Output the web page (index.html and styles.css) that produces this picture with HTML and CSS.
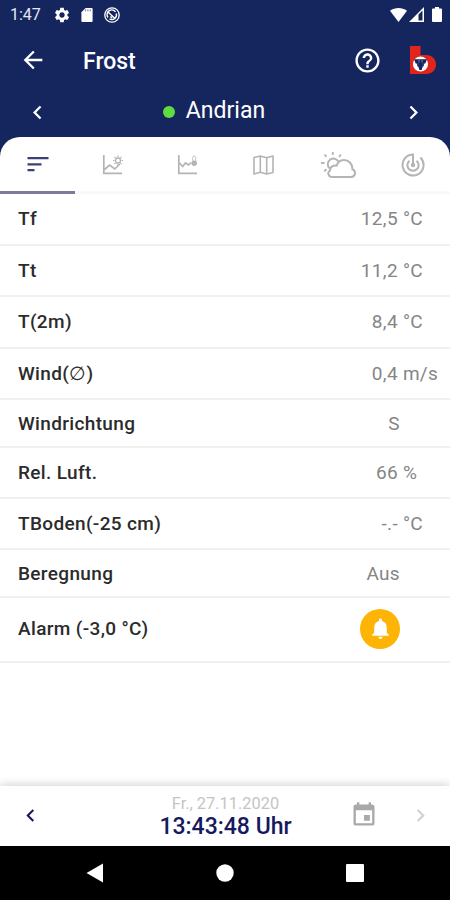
FILE: index.html
```html
<!DOCTYPE html>
<html lang="de">
<head>
<meta charset="UTF-8">
<meta name="viewport" content="width=device-width, initial-scale=1.0">
<title>Frost</title>
<link rel="stylesheet" href="styles.css">
</head>
<body>
<div class="app">
  <header class="header">
    <div class="status-bar">
      <span class="time">1:47</span>
      <svg class="gear" width="18" height="18" viewBox="0 0 24 24"><path d="M19.14 12.94c.04-.3.06-.61.06-.94 0-.32-.02-.64-.07-.94l2.03-1.58c.18-.14.23-.41.12-.61l-1.92-3.32c-.12-.22-.37-.29-.59-.22l-2.39.96c-.5-.38-1.03-.7-1.62-.94l-.36-2.54c-.04-.24-.24-.41-.48-.41h-3.84c-.24 0-.43.17-.47.41l-.36 2.54c-.59.24-1.13.57-1.62.94l-2.39-.96c-.22-.08-.47 0-.59.22L2.74 8.87c-.12.21-.08.47.12.61l2.03 1.58c-.05.3-.09.63-.09.94s.02.64.07.94l-2.03 1.58c-.18.14-.23.41-.12.61l1.92 3.32c.12.22.37.29.59.22l2.39-.96c.5.38 1.03.7 1.62.94l.36 2.54c.05.24.24.41.48.41h3.84c.24 0 .44-.17.47-.41l.36-2.54c.59-.24 1.13-.56 1.62-.94l2.39.96c.22.08.47 0 .59-.22l1.92-3.32c.12-.22.07-.47-.12-.61l-2.01-1.58zM12 15.6c-1.98 0-3.6-1.62-3.6-3.6s1.62-3.6 3.6-3.6 3.6 1.62 3.6 3.6-1.62 3.6-3.6 3.6z"/></svg>
      <svg class="sd" width="12" height="14" viewBox="0 0 12 15"><path d="M4.500 0H11a1 1 0 0 1 1 1v13a1 1 0 0 1-1 1H1a1 1 0 0 1-1-1V4.500z"/><path class="sd-pins" d="M4.500 1.500v2M7 1.500v2M9.500 1.500v2"/></svg>
      <svg class="cast line" width="16" height="16" viewBox="0 0 16 16"><circle cx="8" cy="8" r="7.200" stroke-width="1.300"/><path d="M4 10.500a4.700 4.700 0 0 1 7.500-5.700M12.300 6.500a4.700 4.700 0 0 1-6.800 5.400M4 5l7.500 7M6.500 9.500l1.500 1.500" stroke-width="1.400"/></svg>
      <span class="system">
        <svg width="17" height="14" viewBox="0 0 17 14"><path d="M0 2.800C5-.9 12-.9 17 2.800L8.500 14z"/></svg>
        <svg width="15" height="15" viewBox="0 0 15 15"><path fill-rule="evenodd" d="M15 0v15H0zM13.500 3.500L9.500 7.500v6h4z"/></svg>
        <svg class="battery" width="10" height="15" viewBox="0 0 10 15"><path d="M3 0h4v1.500h2a1 1 0 0 1 1 1V14a1 1 0 0 1-1 1H1a1 1 0 0 1-1-1V2.500a1 1 0 0 1 1-1h2z"/></svg>
      </span>
    </div>
    <div class="title-bar">
      <svg width="28" height="28" viewBox="0 0 24 24"><path d="M20 11H7.830l5.590-5.590L12 4l-8 8 8 8 1.410-1.410L7.830 13H20v-2z"/></svg>
      <h1>Frost</h1>
      <svg class="help" width="29" height="29" viewBox="0 0 24 24"><path d="M11 18h2v-2h-2v2zm1-16C6.480 2 2 6.480 2 12s4.480 10 10 10 10-4.480 10-10S17.520 2 12 2zm0 18c-4.410 0-8-3.590-8-8s3.590-8 8-8 8 3.590 8 8-3.590 8-8 8zm0-14c-2.210 0-4 1.790-4 4h2c0-1.100.9-2 2-2s2 .9 2 2c0 2-3 1.750-3 5h2c0-2.250 3-2.500 3-5 0-2.210-1.790-4-4-4z"/></svg>
      <svg class="logo" width="27" height="28" viewBox="0 0 27 28">
        <path class="logo-b" d="M0 0h10.500v9H16c6 0 10 4 10 9.500S22 28 16 28H0z"/>
        <circle class="logo-disc" cx="10.500" cy="18" r="7.600"/>
        <path class="logo-grape" d="M4 13.300h13l-1.700 4.200h-1l-.8 3h-.8l-1 3.500H9.300l-1-3.500h-.8l-.8-3h-1z"/>
        <path class="logo-gaps" d="M9 14v2.500M12 14v2.500M7.500 18h1M12.500 18h1"/>
      </svg>
    </div>
    <div class="station-bar">
      <svg width="27" height="27" viewBox="0 0 24 24"><path d="M15.410 7.410L14 6l-6 6 6 6 1.410-1.410L10.830 12z"/></svg>
      <div class="station"><span class="dot"></span>Andrian</div>
      <svg width="27" height="27" viewBox="0 0 24 24"><path d="M10 6L8.590 7.410 13.170 12l-4.580 4.590L10 18l6-6z"/></svg>
    </div>
  </header>

  <main class="content">
    <nav class="tabs">
      <div class="tab active">
        <svg class="sort" width="22" height="16" viewBox="0 0 22 16"><path d="M.5 1h21v2.200H.5zM.5 7.200h14v2.200H.5zM.5 13h7v2.200h-7z"/></svg>
      </div>
      <div class="tab">
        <svg class="line" width="22" height="20" viewBox="0 0 22 20"><path d="M1.800 0v18.300H20M2.500 14.500l5-4.500 5.300 4 5-5"/><circle cx="16" cy="5.500" r="2.500" stroke-width="1.300"/><path d="M16 .5v1.500M16 9v1.500M11 5.500h1.500M19.500 5.500H21M12.500 2l1 1M18.500 8l1 1M19.500 2l-1 1M13.500 8l-1 1" stroke-width="1.200"/></svg>
      </div>
      <div class="tab">
        <svg class="line" width="22" height="20" viewBox="0 0 22 20"><path d="M1.800 0v18.300H20M2.500 8l3.200 3.500L8.500 8l3 2 2.500-2.500"/><path d="M15.700 6.500V2.500a1.500 1.500 0 0 1 3 0v4" stroke-width=".8"/><circle class="bulb" cx="17.200" cy="8.300" r="2.700"/></svg>
      </div>
      <div class="tab">
        <svg class="line" width="21" height="20" viewBox="0 0 21 20"><path d="M1 2.500L7.300 1l6.400 1.800L20 1v16.500L13.700 19l-6.400-1.800L1 19zM7.300 1v16.200M13.700 2.800V19" stroke-width="1.600" stroke-linejoin="round"/></svg>
      </div>
      <div class="tab">
        <svg class="line weather" width="35" height="27" viewBox="0 0 35 27"><path d="M11 25h19a4 4 0 0 0 1.500-7.700C31.500 11.500 27.500 8 23 8c-3.700 0-6.300 2.300-7.300 5.500C11.500 12.800 9 15.500 9 18.500c-3.200 2-1.500 6.500 2 6.500z" stroke-width="2"/><path d="M8.500 16.200A5.600 5.600 0 1 1 17.300 9.500" stroke-width="2"/><path d="M11.800 0v3M3.500 2.500l2 2.300M20 2.500l-2 2.300M0 11h3.500M3.200 19.200l2.300-2" stroke-width="1.800"/></svg>
      </div>
      <div class="tab">
        <svg class="line radar" width="24" height="24" viewBox="0 0 24 24"><path d="M12 12V1.500a10.500 10.500 0 1 0 7.400 3M8.500 7.800a5.600 5.600 0 1 0 7 0" stroke-width="2"/><circle class="bulb" cx="12" cy="12" r="2.200"/></svg>
      </div>
    </nav>

    <div class="rows">
      <div class="row"><span>Tf</span><span class="num">12,5</span><span class="unit">°C</span></div>
      <div class="row"><span>Tt</span><span class="num">11,2</span><span class="unit">°C</span></div>
      <div class="row"><span>T(2m)</span><span class="num">8,4</span><span class="unit">°C</span></div>
      <div class="row"><span>Wind(<span class="avg">∅</span>)</span><span class="num">0,4</span><span class="unit">m/s</span></div>
      <div class="row"><span>Windrichtung</span><span class="num">S</span></div>
      <div class="row"><span>Rel. Luft.</span><span class="num">66</span><span class="unit">%</span></div>
      <div class="row"><span>TBoden(-25 cm)</span><span class="num">-.-</span><span class="unit">°C</span></div>
      <div class="row"><span>Beregnung</span><span class="num">Aus</span></div>
      <div class="row alarm">
        <span>Alarm (-3,0 °C)</span>
        <span class="bell"><svg width="25" height="25" viewBox="0 0 24 24"><path d="M12 22c1.100 0 2-.9 2-2h-4c0 1.100.89 2 2 2zm6-6v-5c0-3.070-1.640-5.640-4.500-6.320V4c0-.83-.67-1.500-1.500-1.500s-1.500.67-1.500 1.500v.68C7.630 5.360 6 7.920 6 11v5l-2 2v1h16v-1l-2-2z"/></svg></span>
      </div>
    </div>
  </main>

  <footer class="date-bar">
    <svg class="prev" width="25" height="25" viewBox="0 0 24 24"><path d="M15.410 7.410L14 6l-6 6 6 6 1.410-1.410L10.830 12z"/></svg>
    <div class="date">
      <div class="day">Fr., 27.11.2020</div>
      <div class="clock">13:43:48 Uhr</div>
    </div>
    <svg class="calendar" width="28" height="28" viewBox="0 0 24 24"><path d="M17 12h-5v5h5v-5zM16 1v2H8V1H6v2H5c-1.110 0-1.990.9-1.990 2L3 19c0 1.100.89 2 2 2h14c1.100 0 2-.9 2-2V5c0-1.100-.9-2-2-2h-1V1h-2zm3 18H5V8h14v11z"/></svg>
    <svg class="next" width="25" height="25" viewBox="0 0 24 24"><path d="M10 6L8.590 7.410 13.170 12l-4.580 4.590L10 18l6-6z"/></svg>
  </footer>

  <div class="nav-bar">
    <svg width="18" height="20" viewBox="0 0 18 20"><path d="M17 .5v19L.5 10z"/></svg>
    <svg width="18" height="18" viewBox="0 0 18 18"><circle cx="9" cy="9" r="8.700"/></svg>
    <svg width="18" height="18" viewBox="0 0 18 18"><rect width="18" height="18" rx="1"/></svg>
  </div>
</div>
</body>
</html>
```
FILE: styles.css
```css
* {
  box-sizing: border-box;
}

body {
  margin: 0;
  font-family: Roboto, "Noto Sans", sans-serif;
  background: #fff;
}

svg {
  display: block;
  flex: none;
  fill: currentColor;
}

.line {
  fill: none;
  stroke: currentColor;
  stroke-width: 1.7;
}

.bulb {
  fill: currentColor;
  stroke: none;
}

.app {
  height: 900px;
  display: flex;
  flex-direction: column;
  background: #15265f;
  overflow: hidden;
}

.header {
  height: 137px;
  color: #fff;
}

.status-bar {
  display: flex;
  align-items: center;
  height: 29px;
  padding: 0 8px 0 10px;
}

.time {
  width: 43px;
  font-size: 16px;
  color: #e4e7f0;
}

.sd {
  margin-left: 10px;
}

.sd-pins {
  stroke: #15265f;
  stroke-width: 0.7;
}

.cast {
  margin-left: 11px;
}

.system {
  display: flex;
  align-items: center;
  gap: 2px;
  margin-left: auto;
}

.battery {
  margin-left: 6px;
}

.title-bar {
  display: flex;
  align-items: center;
  height: 62px;
  padding: 0 13px 0 19px;
}

.title-bar h1 {
  margin: 3px 0 0 36px;
  font-size: 23px;
  font-weight: 500;
}

.help {
  margin-left: auto;
}

.logo {
  margin-left: 28px;
}

.logo-b {
  fill: #e1251b;
}

.logo-disc {
  fill: #fff;
}

.logo-grape {
  fill: #15265f;
}

.logo-gaps {
  stroke: #8d97b8;
  stroke-width: 0.8;
}

.station-bar {
  display: flex;
  align-items: center;
  justify-content: space-between;
  height: 43px;
  padding: 0 23px 0 24px;
}

.station {
  display: flex;
  align-items: center;
  gap: 11px;
  margin: -5px 23px 0 0;
  font-size: 23px;
}

.dot {
  width: 12px;
  height: 12px;
  margin-top: 4px;
  border-radius: 50%;
  background: #60dc3c;
}

.content {
  flex: 1;
  background: #fff;
  border-radius: 20px 20px 0 0;
}

.tabs {
  display: flex;
  height: 57px;
  border-bottom: 3px solid #f9f9f9;
}

.tab {
  display: flex;
  align-items: center;
  justify-content: center;
  width: 75px;
  height: 57px;
  padding: 2px 0 0 1px;
  border-bottom: 3px solid transparent;
  color: #b4b4b4;
}

.active {
  padding-top: 0;
  color: #3d4078;
  border-color: #7d7b9d;
}

.row {
  display: flex;
  align-items: center;
  height: 51.5px;
  padding-left: 18px;
  border-bottom: 2px solid #f0f0f0;
  font-size: 19px;
  font-weight: 500;
  letter-spacing: 0.35px;
  color: #2b2b2b;
}

.row:nth-child(5),
.row:nth-child(8) {
  height: 48px;
}

.row:nth-child(6),
.row:nth-child(7) {
  height: 51px;
}

.num {
  margin-left: auto;
  font-weight: 400;
  color: #858585;
}

.num:last-child {
  margin-right: 50px;
}

.unit {
  width: 52px;
  padding-left: 5px;
  font-weight: 400;
  letter-spacing: 0.2px;
  color: #858585;
}

.avg {
  font-weight: 400;
}

.row.alarm {
  height: 65px;
  padding-bottom: 2px;
}

.bell {
  display: flex;
  align-items: center;
  justify-content: center;
  width: 40px;
  height: 40px;
  margin: 0 50px 0 auto;
  border-radius: 50%;
  background: #fdb405;
  color: #fff;
}

.date-bar {
  display: flex;
  align-items: center;
  height: 60px;
  padding: 0 17px 2px 18px;
  background: #fff;
  box-shadow: 0 -2px 8px rgba(0, 0, 0, 0.16);
  color: #15195f;
}

.date {
  flex: 1;
  padding: 2px 0 0 58px;
  text-align: center;
}

.day {
  font-size: 16.4px;
  line-height: 20px;
  color: #c4c4c4;
}

.clock {
  font-size: 23px;
  line-height: 25px;
  font-weight: 500;
}

.calendar {
  color: #a9a9a9;
}

.next {
  margin-left: 30px;
  color: #d0d0d0;
}

.nav-bar {
  display: flex;
  align-items: center;
  justify-content: center;
  gap: 112px;
  height: 54px;
  background: #000;
  color: #fff;
}
```
